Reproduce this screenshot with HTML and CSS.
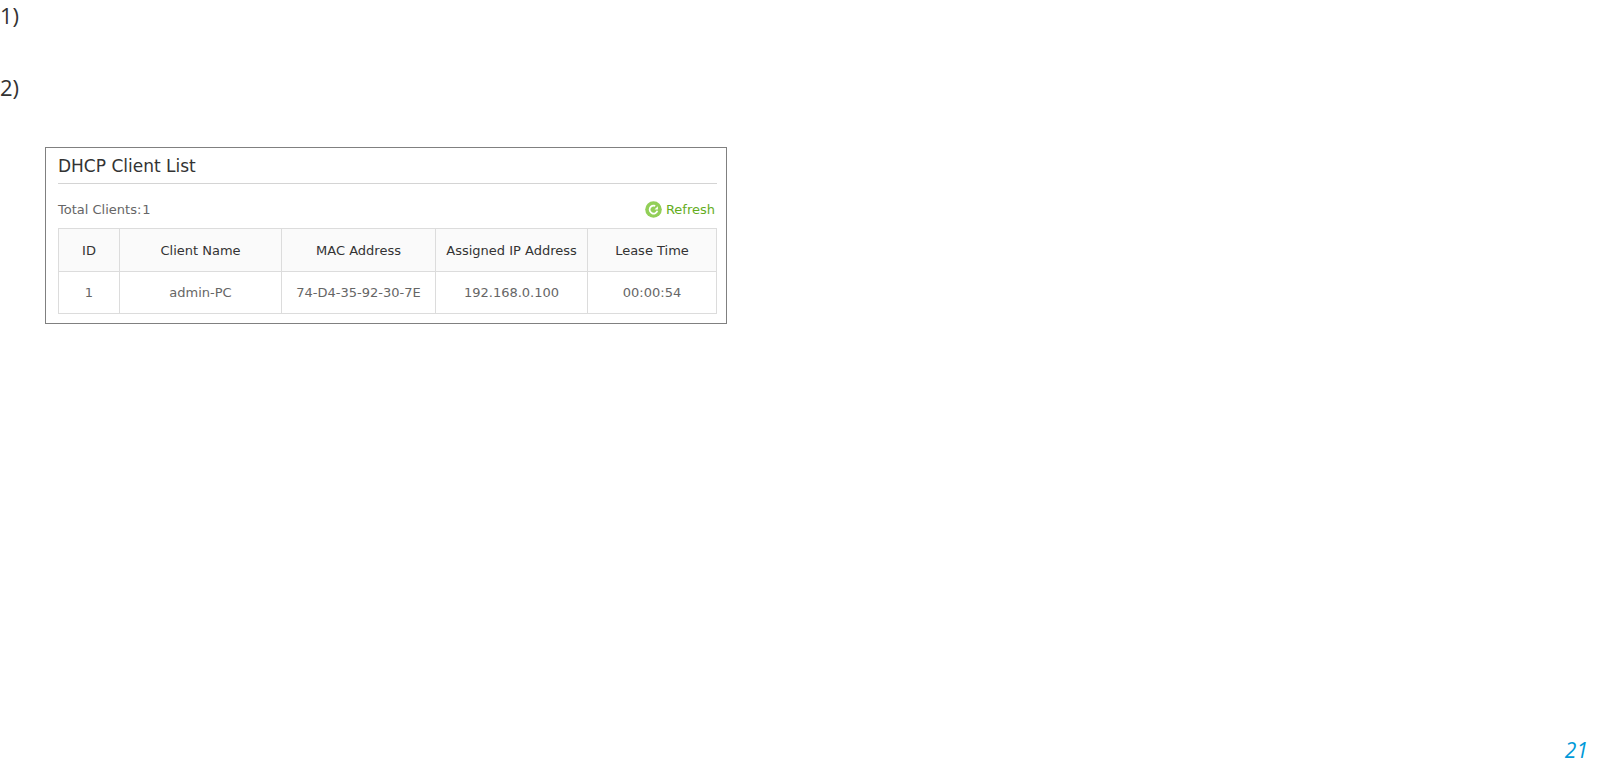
FILE: index.html
```
<!DOCTYPE html>
<html lang="en">
<head>
  <meta charset="utf-8">
  <title>DHCP Client List</title>
  <link rel="stylesheet" href="styles.css">
</head>
<body>
  <main class="content">
    <div class="step">1)</div>
    <div class="step">2)</div>

    <section class="panel">
      <h1 class="panel-title">DHCP Client List</h1>
      <div class="toolbar">
        <div class="total"><span>Total Clients:</span><span>1</span></div>
        <button type="button" class="refresh">
          <svg class="refresh-icon" viewBox="0 0 17 17" aria-hidden="true">
            <circle cx="8.5" cy="8.5" r="8.3" fill="#92cf58"/>
            <path d="M10.2 4.9A4 4 0 1 0 12.4 9.8" fill="none" stroke="#fff" stroke-width="1.7"/>
            <path d="M12.9 5.2V8.6H9.5Z" fill="#fff"/>
          </svg>
          Refresh
        </button>
      </div>
      <table class="clients">
        <colgroup>
          <col class="col-id">
          <col class="col-name">
          <col class="col-mac">
          <col class="col-ip">
          <col class="col-lease">
        </colgroup>
        <thead>
          <tr>
            <th>ID</th>
            <th>Client Name</th>
            <th>MAC Address</th>
            <th>Assigned IP Address</th>
            <th>Lease Time</th>
          </tr>
        </thead>
        <tbody>
          <tr>
            <td>1</td>
            <td>admin-PC</td>
            <td>74-D4-35-92-30-7E</td>
            <td>192.168.0.100</td>
            <td>00:00:54</td>
          </tr>
        </tbody>
      </table>
    </section>
  </main>

  <footer class="page-number">21</footer>
</body>
</html>
```
FILE: styles.css
```
* {
  box-sizing: border-box;
}

body {
  display: flex;
  flex-direction: column;
  min-height: 100vh;
  margin: 0;
  background: #fff;
  color: #333;
  font-family: "DejaVu Sans", Verdana, sans-serif;
  font-size: 13px;
}

.content {
  flex: 1;
}

.step {
  height: 72px;
  font-family: "Open Sans", sans-serif;
  font-size: 22px;
  line-height: 30px;
}

.panel {
  max-width: 682px;
  margin: 3px 0 0 45px;
  padding: 0 9px 9px 12px;
  border: 1px solid #808080;
}

.panel-title {
  height: 36px;
  margin: 0;
  border-bottom: 1px solid #d4d4d4;
  font-size: 17px;
  font-weight: 400;
  line-height: 36px;
}

.toolbar {
  display: flex;
  align-items: center;
  justify-content: space-between;
  height: 44px;
  padding: 7px 2px 0 0;
}

.total {
  display: flex;
  gap: 1px;
  color: #666;
}

.refresh {
  display: flex;
  align-items: center;
  gap: 4px;
  padding: 0;
  border: 0;
  background: none;
  color: #64ad1d;
  font: inherit;
  cursor: pointer;
}

.refresh-icon {
  width: 17px;
  height: 17px;
}

.clients {
  width: 100%;
  border-collapse: collapse;
  table-layout: fixed;
}

.col-id {
  width: 61px;
}

.col-mac {
  width: 154px;
}

.col-ip {
  width: 152px;
}

.col-lease {
  width: 129px;
}

.clients th,
.clients td {
  height: 43px;
  padding: 0;
  border: 1px solid #dcdcdc;
  font-weight: 400;
  text-align: center;
  white-space: nowrap;
}

.clients th {
  background: #fafafa;
}

.clients td {
  height: 42px;
  color: #666;
}

.page-number {
  padding-right: 12px;
  color: #0099d8;
  font-family: "Open Sans", sans-serif;
  font-size: 21px;
  font-style: italic;
  line-height: 28px;
  text-align: right;
}
```
